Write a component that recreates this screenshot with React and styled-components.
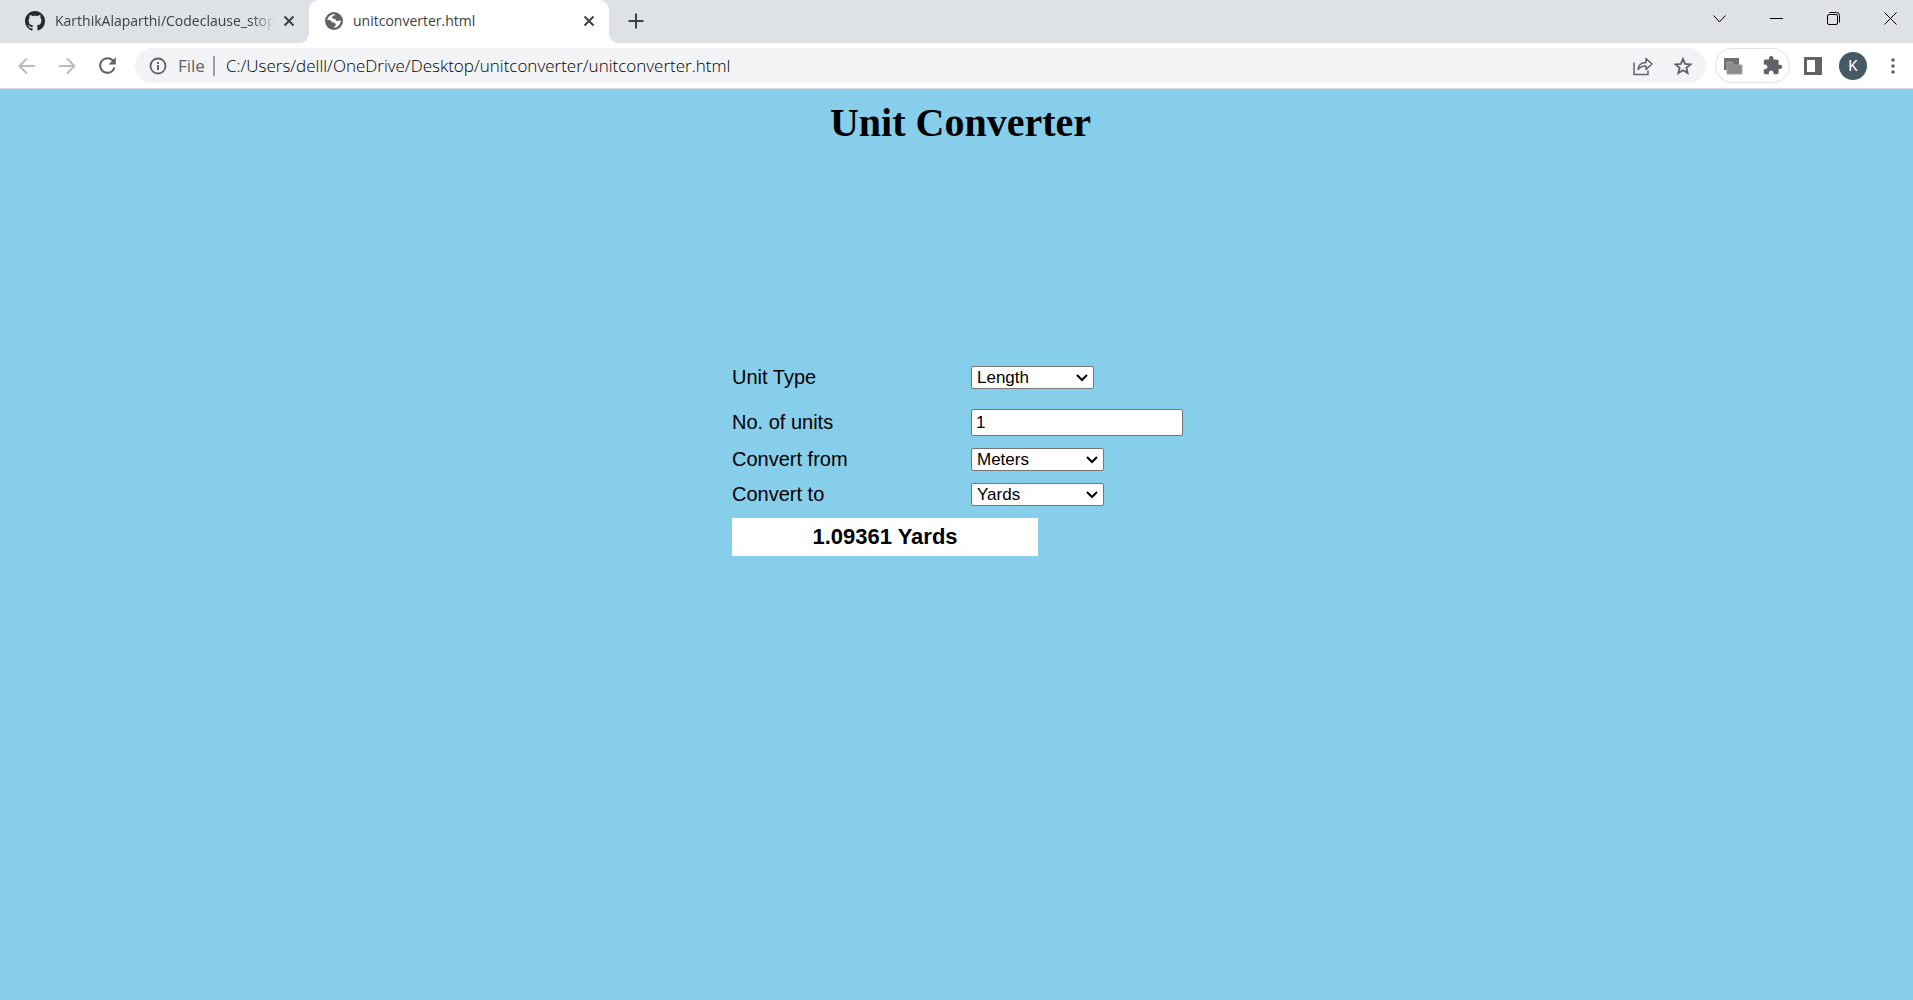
import React, { useState } from "react";
import styled, { createGlobalStyle, css } from "styled-components";
import { MdExtension, MdRefresh } from "react-icons/md";

const GlobalStyle = createGlobalStyle`
  * { box-sizing: border-box; }
  body {
    margin: 0;
    background: #87ceeb;
    font-family: "Liberation Sans", Arial, sans-serif;
    color: #000;
  }
`;

const chromeFont = css`
  font-family: "Open Sans", "Noto Sans", sans-serif;
`;

const plainButton = css`
  display: inline-flex;
  align-items: center;
  justify-content: center;
  flex: none;
  padding: 0;
  border: 0;
  background: transparent;
  color: inherit;
`;

/* ---------- Tab strip ---------- */

const TabStrip = styled.header`
  ${chromeFont}
  display: flex;
  height: 43px;
  background: #dee1e6;
  color: #3c4043;
`;

const Tab = styled.div`
  position: relative;
  display: flex;
  align-items: center;
  height: 43px;
  width: ${(p) => (p.$active ? 300 : 309)}px;
  padding: 0 10px 2px ${(p) => (p.$active ? 16 : 25)}px;
  border-radius: 10px 10px 0 0;
  background: ${(p) => (p.$active ? "#fff" : "transparent")};

  &::before,
  &::after {
    content: ${(p) => (p.$active ? '""' : "none")};
    position: absolute;
    bottom: 0;
    width: 10px;
    height: 10px;
  }
  &::before {
    left: -10px;
    background: radial-gradient(circle at 0 0, transparent 10px, #fff 10px);
  }
  &::after {
    right: -10px;
    background: radial-gradient(circle at 100% 0, transparent 10px, #fff 10px);
  }
`;

const TabTitle = styled.span`
  flex: 1;
  min-width: 0;
  margin: 0 4px 0 10px;
  overflow: hidden;
  white-space: nowrap;
  font-size: 14px;
  line-height: 20px;
  ${(p) =>
    p.$fade &&
    css`
      mask-image: linear-gradient(to right, #000 calc(100% - 24px), transparent);
    `}
`;

const TabButton = styled.button`
  ${plainButton}
  width: 20px;
  height: 20px;
`;

const NewTab = styled.button`
  ${plainButton}
  width: 28px;
  height: 42px;
  margin-left: 13px;
`;

const WindowControls = styled.div`
  display: flex;
  gap: 12px;
  margin-left: auto;
  color: #000;
`;

const WindowButton = styled.button`
  ${plainButton}
  width: 45px;
  height: 37px;
`;

/* ---------- Toolbar ---------- */

const Toolbar = styled.nav`
  ${chromeFont}
  display: flex;
  align-items: center;
  gap: 9px;
  height: 46px;
  padding: 0 6px 0 13px;
  border-bottom: 1px solid #d5d8dc;
  background: #fff;
  color: #5f6368;
`;

const NavGroup = styled.div`
  display: flex;
  gap: 12px;
  padding-right: 5px;
`;

const IconButton = styled.button`
  ${plainButton}
  width: 28px;
  height: 28px;

  &:disabled {
    color: #babcbe;
  }
`;

const Omnibox = styled.div`
  display: flex;
  align-items: center;
  flex: 1;
  gap: 11px;
  height: 35px;
  padding: 0 9px 0 14px;
  border-radius: 18px;
  background: #f1f3f4;
  font-size: 17px;
`;

const Scheme = styled.span`
  padding-right: 8px;
  border-right: 2px solid #9aa0a6;
  line-height: 20px;
`;

const Address = styled.input`
  flex: 1;
  min-width: 0;
  padding: 0;
  border: 0;
  outline: 0;
  background: transparent;
  color: #000;
  font: inherit;
  font-weight: 300;
`;

const OmniboxActions = styled.div`
  display: flex;
  gap: 12px;
`;

const Extensions = styled.div`
  display: flex;
  align-items: center;
  justify-content: space-between;
  width: 75px;
  height: 35px;
  padding: 0 3px;
  border: 1px solid #dfe1e5;
  border-radius: 18px;
`;

const ToolbarEnd = styled.div`
  display: flex;
  align-items: center;
  gap: 12px;
`;

const Avatar = styled.button`
  ${plainButton}
  width: 28px;
  height: 28px;
  border-radius: 50%;
  background: #455a64;
  color: #fff;
  font-family: Roboto, sans-serif;
  font-size: 15px;
`;

/* ---------- Converter page ---------- */

const Page = styled.main`
  display: flex;
  flex-direction: column;
  align-items: center;
  padding-left: 2px;
`;

const Title = styled.h1`
  margin: 11px 0 0;
  padding-left: 6px;
  font-family: "Liberation Serif", "Times New Roman", serif;
  font-size: 40px;
  line-height: 46px;
`;

const Form = styled.form`
  display: flex;
  flex-direction: column;
  width: 451px;
  margin-top: 214px;
`;

const Row = styled.div`
  display: grid;
  grid-template-columns: 239px 212px;
  align-items: center;
  justify-items: start;
  padding: 6px 0;
  margin-bottom: ${(p) => (p.$spaced ? 8 : 0)}px;
`;

const Label = styled.label`
  font-size: 20px;
  line-height: 23px;
`;

const controlBox = css`
  border: 1px solid #767676;
  border-radius: 2px;
  background: #fff;
  color: #000;
  font-family: inherit;
  font-size: 17px;
`;

const NumberBox = styled.input`
  ${controlBox}
  width: 100%;
  height: 27px;
  padding: 0 4px;
`;

const SelectWrap = styled.div`
  position: relative;
  width: ${(p) => p.$width}px;
  height: 23px;

  svg {
    position: absolute;
    right: 6px;
    top: 8px;
    pointer-events: none;
  }
`;

const SelectBox = styled.select`
  ${controlBox}
  display: block;
  appearance: none;
  width: 100%;
  height: 23px;
  padding: 0 20px 0 5px;
`;

const Result = styled.output`
  width: 306px;
  margin-top: 6px;
  background: #fff;
  font-size: 22px;
  font-weight: bold;
  line-height: 38px;
  text-align: center;
`;

/* ---------- Icons ---------- */

const Stroke = ({ w, h, d, width = 2, ...rest }) => (
  <svg width={w} height={h} viewBox={`0 0 ${w} ${h}`} fill="none" stroke="currentColor" strokeWidth={width} {...rest}>
    <path d={d} />
  </svg>
);

const CloseIcon = () => <Stroke w={12} h={12} d="M1.5 1.5l9 9M10.5 1.5l-9 9" />;

const GithubIcon = () => (
  <svg width="20" height="20" viewBox="0 0 16 16" fill="#24292f">
    <path d="M8 0C3.58 0 0 3.58 0 8c0 3.54 2.29 6.53 5.47 7.59.4.07.55-.17.55-.38 0-.19-.01-.82-.01-1.49-2.01.37-2.53-.49-2.69-.94-.09-.23-.48-.94-.82-1.13-.28-.15-.68-.52-.01-.53.63-.01 1.08.58 1.23.82.72 1.21 1.87.87 2.33.66.07-.52.28-.87.51-1.07-1.78-.2-3.64-.89-3.64-3.95 0-.87.31-1.59.82-2.15-.08-.2-.36-1.02.08-2.12 0 0 .67-.21 2.2.82.64-.18 1.32-.27 2-.27.68 0 1.36.09 2 .27 1.53-1.04 2.2-.82 2.2-.82.44 1.1.16 1.92.08 2.12.51.56.82 1.27.82 2.15 0 3.07-1.87 3.75-3.65 3.95.29.25.54.73.54 1.48 0 1.07-.01 1.93-.01 2.2 0 .21.15.46.55.38A8.013 8.013 0 0 0 16 8c0-4.42-3.58-8-8-8z" />
  </svg>
);

const GlobeIcon = () => (
  <svg width="18" height="18" viewBox="0 0 19 19">
    <circle cx="9.500" cy="9.500" r="9.500" fill="#5f6368" />
    <path
      fill="#fff"
      d="M11 2.300C10 4 7.800 3.800 7.500 5.500c-.2 1.500 1.300 1.500 2.500 1.700 1.800.2 1 2 2.500 2.200 1.600.2 2.600-.6 4.200-.4-.2 4.300-3.400 7.500-7.500 7.700.2-1.600 2.200-1.800 2.200-3.500 0-2.200-2.600-1.600-4-2.700C6.200 9.600 5.800 8.500 4.500 8.500H2.400c.5-3.600 4.100-6.500 8.600-6.200z"
    />
  </svg>
);

const InfoIcon = () => (
  <svg width="18" height="18" viewBox="0 0 18 18" fill="none" stroke="currentColor" strokeWidth="2">
    <circle cx="9" cy="9" r="7.500" strokeWidth="1.800" />
    <path d="M9 8v5M9 5v2" />
  </svg>
);

const ShareIcon = () => (
  <svg width="22" height="22" viewBox="0 0 22 22" fill="none" stroke="currentColor" strokeWidth="1.5">
    <path d="M2 7.500v12h14v-4" />
    <path d="M6 14.500c.5-4 3-7 8-7V3.500l6 5.500-6 5.500V11c-4 0-6 1-8 3.500z" strokeLinejoin="round" />
  </svg>
);

const StarIcon = () => (
  <svg width="20" height="20" viewBox="0 0 20 20" fill="none" stroke="currentColor" strokeWidth="1.900">
    <path d="M10 3l2.100 4.900 5.300.5-4 3.500 1.200 5.200L10 14.300l-4.600 2.800 1.200-5.200-4-3.500 5.300-.5z" />
  </svg>
);

const StackIcon = () => (
  <svg width="20" height="18" viewBox="0 0 20 18">
    <path d="M1 1h15v12H1z" fill="#6f6f6f" />
    <path d="M4 5h5l2 3h8v9H4z" fill="#8b8b8b" stroke="#a4a4a4" />
  </svg>
);

const PanelIcon = () => (
  <svg width="18" height="18" viewBox="0 0 18 18" fill="currentColor">
    <path fillRule="evenodd" d="M0 0h18v18H0zM3 3v12h8V3z" />
  </svg>
);

/* ---------- Data ---------- */

const UNITS = {
  Length: { Meters: 1, Yards: 0.9144, Feet: 0.3048, Inches: 0.0254, Kilometers: 1000 },
  Weight: { Grams: 1, Kilograms: 1000, Pounds: 453.592, Ounces: 28.3495 },
};

function Select({ id, width, value, options, onChange }) {
  return (
    <SelectWrap $width={width}>
      <SelectBox id={id} value={value} onChange={(e) => onChange(e.target.value)}>
        {options.map((o) => (
          <option key={o}>{o}</option>
        ))}
      </SelectBox>
      <Stroke w={12} h={8} d="M1 1l5 5 5-5" />
    </SelectWrap>
  );
}

export default function App() {
  const [type, setType] = useState("Length");
  const [amount, setAmount] = useState("1");
  const [from, setFrom] = useState("Meters");
  const [to, setTo] = useState("Yards");

  const names = Object.keys(UNITS[type]);
  const result = Number(((Number(amount) * UNITS[type][from]) / UNITS[type][to]).toFixed(5));

  const changeType = (next) => {
    const [first, second] = Object.keys(UNITS[next]);
    setType(next);
    setFrom(first);
    setTo(second);
  };

  return (
    <>
      <GlobalStyle />
      <TabStrip>
        <Tab>
          <GithubIcon />
          <TabTitle $fade>KarthikAlaparthi/Codeclause_stop</TabTitle>
          <TabButton aria-label="Close tab"><CloseIcon /></TabButton>
        </Tab>
        <Tab $active>
          <GlobeIcon />
          <TabTitle>unitconverter.html</TabTitle>
          <TabButton aria-label="Close tab"><CloseIcon /></TabButton>
        </Tab>
        <NewTab aria-label="New tab"><Stroke w={16} h={16} d="M8 .5v15M.5 8h15" /></NewTab>
        <WindowControls>
          <WindowButton aria-label="Search tabs"><Stroke w={13} h={8} width={1} d="M.5 .5l6 6.500 6-6.500" /></WindowButton>
          <WindowButton aria-label="Minimize"><Stroke w={13} h={1} d="M0 .5h13" width={1} /></WindowButton>
          <WindowButton aria-label="Restore">
            <Stroke w={13} h={13} width={1} d="M2 2.500h7a1.500 1.500 0 0 1 1.500 1.500v7a1.500 1.500 0 0 1-1.500 1.500H2A1.500 1.500 0 0 1 .5 11V4A1.500 1.500 0 0 1 2 2.500zM2.500 .5h7a3 3 0 0 1 3 3v7" />
          </WindowButton>
          <WindowButton aria-label="Close"><Stroke w={13} h={13} width={1} d="M.5 .5l12 12M12.500 .5l-12 12" /></WindowButton>
        </WindowControls>
      </TabStrip>

      <Toolbar>
        <NavGroup>
          <IconButton disabled aria-label="Back"><Stroke w={18} h={18} d="M17 9H2M9 1.500L1.500 9 9 16.500" /></IconButton>
          <IconButton disabled aria-label="Forward"><Stroke w={18} h={18} d="M1 9h15M9 1.500L16.500 9 9 16.500" /></IconButton>
          <IconButton aria-label="Reload"><MdRefresh size={25} /></IconButton>
        </NavGroup>
        <Omnibox>
          <InfoIcon />
          <Scheme>File</Scheme>
          <Address aria-label="Address" defaultValue="C:/Users/delll/OneDrive/Desktop/unitconverter/unitconverter.html" />
          <OmniboxActions>
            <IconButton aria-label="Share"><ShareIcon /></IconButton>
            <IconButton aria-label="Bookmark"><StarIcon /></IconButton>
          </OmniboxActions>
        </Omnibox>
        <Extensions>
          <IconButton aria-label="Screen extension"><StackIcon /></IconButton>
          <IconButton aria-label="Extensions"><MdExtension size={21} /></IconButton>
        </Extensions>
        <ToolbarEnd>
          <IconButton aria-label="Side panel"><PanelIcon /></IconButton>
          <Avatar aria-label="Profile">K</Avatar>
          <IconButton aria-label="Menu">
            <svg width="4" height="16" viewBox="0 0 4 16" fill="currentColor">
              <circle cx="2" cy="2" r="1.800" />
              <circle cx="2" cy="8" r="1.800" />
              <circle cx="2" cy="14" r="1.800" />
            </svg>
          </IconButton>
        </ToolbarEnd>
      </Toolbar>

      <Page>
        <Title>Unit Converter</Title>
        <Form onSubmit={(e) => e.preventDefault()}>
          <Row $spaced>
            <Label htmlFor="type">Unit Type</Label>
            <Select id="type" width={123} value={type} options={Object.keys(UNITS)} onChange={changeType} />
          </Row>
          <Row>
            <Label htmlFor="amount">No. of units</Label>
            <NumberBox id="amount" value={amount} onChange={(e) => setAmount(e.target.value)} />
          </Row>
          <Row>
            <Label htmlFor="from">Convert from</Label>
            <Select id="from" width={133} value={from} options={names} onChange={setFrom} />
          </Row>
          <Row>
            <Label htmlFor="to">Convert to</Label>
            <Select id="to" width={133} value={to} options={names} onChange={setTo} />
          </Row>
          <Result htmlFor="amount from to">{result} {to}</Result>
        </Form>
      </Page>
    </>
  );
}
